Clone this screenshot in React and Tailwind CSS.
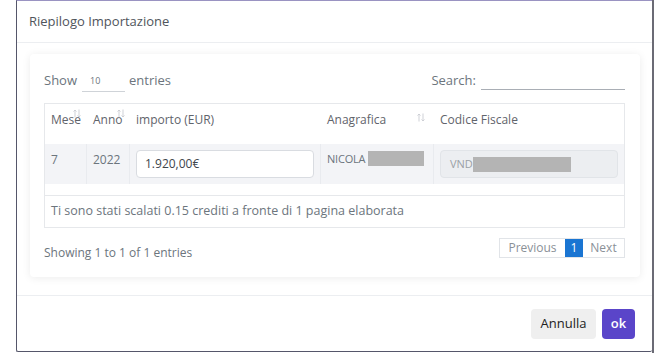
import React from "react";

const F = { fontFamily: '"Open Sans", "Liberation Sans", sans-serif' };

function Sort({ className }) {
  return (
    <svg className={"absolute " + className} width="8" height="9" viewBox="0 0 8 9" fill="none" stroke="#c9ccd2" strokeWidth="0.9">
      <path d="M2 8.5V1M0.5 2.5L2 1l1.5 1.5" />
      <path d="M6 0.5V8M4.5 6.5L6 8l1.5-1.5" />
    </svg>
  );
}

export default function App() {
  return (
    <div className="w-[654px] h-[353px] bg-white flex overflow-hidden text-[#6c757d]" style={F}>
      <div className="w-[16px] shrink-0 bg-white" />
      <div className="w-[636px] h-[352px] shrink-0 bg-white border-l border-b border-t border-l-[#55566a] border-b-[#55566a] border-t-[#9a93c2] flex flex-col rounded-b-[2px]">
        {/* header */}
        <div className="h-[42px] shrink-0 border-b border-[#eceef1] flex items-center pl-[12px]">
          <span className="text-[13px] text-[#50555c]">Riepilogo Importazione</span>
        </div>
        {/* body */}
        <div className="h-[253px] shrink-0 border-b border-[#eceef1] pt-[11px] pl-[13px] pr-[12px]">
          <div className="h-[223px] bg-white rounded-[4px] shadow-[0_1px_8px_rgba(0,0,0,0.08)] pt-[17px] pl-[14px] pr-[15px]">
            {/* controls */}
            <div className="flex justify-between items-center h-[20px] text-[13px]">
              <div className="flex items-center">
                <span>Show</span>
                <span className="ml-[5px] w-[43px] border-b border-[#cfd3d8] text-[9px] pl-[8px] pb-[3px] pt-[4px] text-[#6c757d]">10</span>
                <span className="ml-[4px]">entries</span>
              </div>
              <div className="flex items-center">
                <span>Search:</span>
                <span className="ml-[5px] w-[144px] h-[18px] border-b border-[#a9aeb5]" />
              </div>
            </div>
            {/* table */}
            <div className="mt-[12px] border border-[#e6e8eb] text-[12px]">
              <div className="flex h-[40px] text-[#5f646b] font-medium">
                <div className="relative w-[42px] pl-[6px] pt-[7px]">Mese<Sort className="left-[28px] top-[5px]" /></div>
                <div className="relative w-[43px] pl-[6px] pt-[7px]">Anno<Sort className="left-[30px] top-[5px]" /></div>
                <div className="relative w-[191px] pl-[6px] pt-[7px]">importo (EUR)</div>
                <div className="relative w-[113px] pl-[6px] pt-[7px]">Anagrafica<Sort className="left-[96px] top-[9px]" /></div>
                <div className="relative flex-1 pl-[6px] pt-[7px]">Codice Fiscale</div>
              </div>
              <div className="flex h-[40px] bg-[#f3f4f7]">
                <div className="w-[42px] pl-[6px] pt-[7px] border-r border-[#e9ebef]">7</div>
                <div className="w-[43px] pl-[6px] pt-[7px] border-r border-[#e9ebef]">2022</div>
                <div className="w-[191px] pl-[6px] pt-[6px] border-r border-[#e9ebef]">
                  <div className="w-[178px] h-[28px] bg-white border border-[#d9dce1] rounded-[4px] flex items-center pl-[8px] text-[#40454b]">1.920,00€</div>
                </div>
                <div className="w-[113px] pl-[6px] pt-[7px] border-r border-[#e9ebef] flex items-start">
                  <span className="text-[11px] tracking-[-0.2px]">NICOLA</span>
                  <span className="ml-[3px] w-[56px] h-[15px] bg-[#b4b4b4]" />
                </div>
                <div className="flex-1 pl-[6px] pt-[6px]">
                  <div className="w-[178px] h-[28px] bg-[#eceef1] border border-[#e1e4e8] rounded-[4px] flex items-center pl-[9px] text-[11px] text-[#9aa0a6]">
                    <span>VND</span>
                    <span className="w-[98px] h-[15px] bg-[#b4b4b4]" />
                  </div>
                </div>
              </div>
              <div className="h-[12px] border-b border-[#e6e8eb]" />
              <div className="h-[31px] flex items-center pl-[6px] text-[12.5px]">
                Ti sono stati scalati 0.15 crediti a fronte di 1 pagina elaborata
              </div>
            </div>
            {/* bottom */}
            <div className="flex justify-between items-start mt-[10px] text-[12px]">
              <span className="pt-[6px]">Showing 1 to 1 of 1 entries</span>
              <div className="flex h-[20px] border border-[#e1e4e8] text-[#8a9097]">
                <span className="w-[65px] flex items-center justify-center">Previous</span>
                <span className="w-[18px] flex items-center justify-center bg-[#1a75d2] text-white">1</span>
                <span className="w-[41px] flex items-center justify-center">Next</span>
              </div>
            </div>
          </div>
        </div>
        {/* footer */}
        <div className="flex-1 flex items-center justify-end pr-[17px] gap-[6px]">
          <button className="w-[65px] h-[30px] rounded-[4px] bg-[#efefef] text-[13px] text-[#222]">Annulla</button>
          <button className="w-[33px] h-[30px] rounded-[4px] bg-[#5a45c9] text-[13px] font-semibold text-white">ok</button>
        </div>
      </div>
      <div className="w-[2px] shrink-0 bg-[#6b6b75]" />
    </div>
  );
}
